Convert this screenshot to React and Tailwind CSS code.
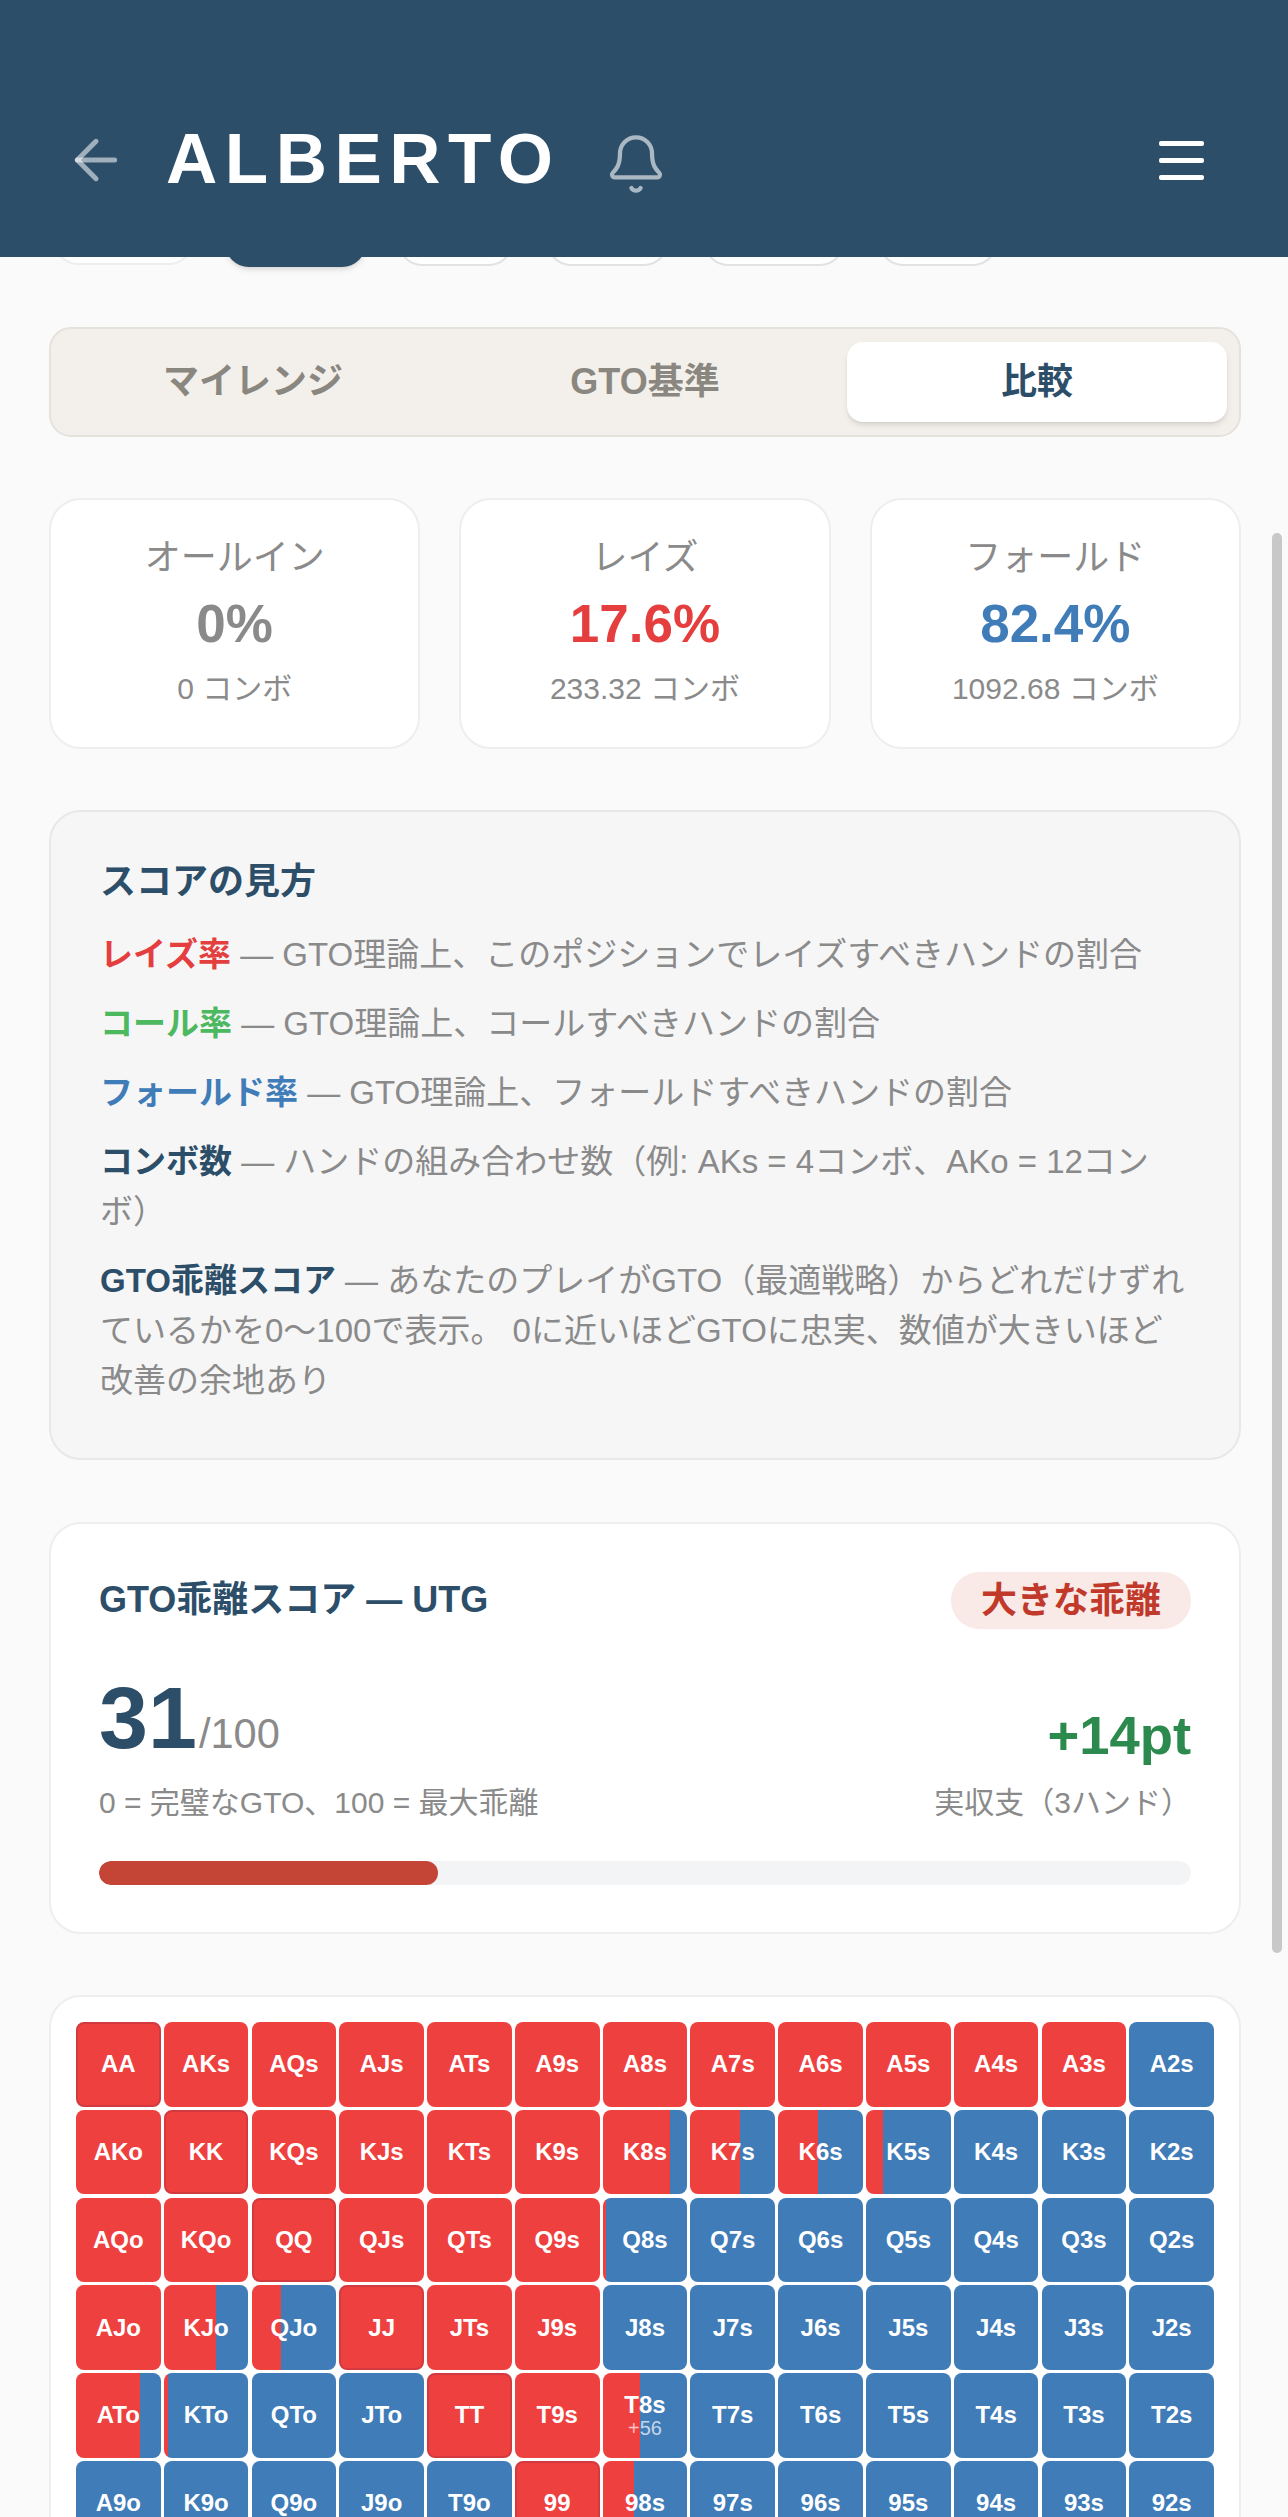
import { ArrowLeft, Bell } from 'lucide-react';

const ranks = ['A', 'K', 'Q', 'J', 'T', '9', '8', '7', '6', '5', '4', '3', '2'];

// share of the cell that is raise, everything not listed is fold
const raise = {
  KJo: 62, QJo: 35, ATo: 75, KTo: 5, T8s: 44, '98s': 37, K8s: 80, K7s: 59, K6s: 47, K5s: 20, Q8s: 4,
  AKs: 100, AQs: 100, AJs: 100, ATs: 100, A9s: 100, A8s: 100, A7s: 100, A6s: 100, A5s: 100, A4s: 100, A3s: 100,
  AKo: 100, KQs: 100, KJs: 100, KTs: 100, K9s: 100, AQo: 100, KQo: 100, QJs: 100, QTs: 100, Q9s: 100,
  AJo: 100, JTs: 100, J9s: 100, T9s: 100,
};

const handName = (row, col) => {
  if (row === col) return ranks[row] + ranks[col];
  return row < col ? ranks[row] + ranks[col] + 's' : ranks[col] + ranks[row] + 'o';
};

const HandCell = ({ row, col }) => {
  const name = handName(row, col);
  const isPair = row === col;
  const pct = isPair ? (row < 7 ? 100 : 0) : raise[name] || 0;
  return (
    <div
      className={`aspect-square rounded-[8px] flex flex-col items-center justify-center text-white font-bold text-[24px] leading-[26px] ${isPair ? 'border-2 border-[#d23a40]' : ''}`}
      style={{ background: `linear-gradient(to right, #ef4040 ${pct}%, #3f7cb8 ${pct}%)` }}
    >
      <span>{name}</span>
      {name === 'T8s' && <span className="font-normal text-[20px] leading-[20px] text-white/70">+56</span>}
    </div>
  );
};

const StatCard = ({ label, value, sub, color }) => (
  <div className="flex-1 h-[251px] bg-white border-2 border-[#eeeeee] rounded-[32px] flex flex-col items-center pt-[35px]">
    <div className="text-[36px] leading-[46px] text-[#8a8a8a]">{label}</div>
    <div className={`text-[53px] leading-[62px] font-bold mt-[12px] ${color}`}>{value}</div>
    <div className="text-[30px] leading-[40px] text-[#8a8a8a] mt-[14px]">{sub}</div>
  </div>
);

const Legend = ({ term, color, children, className }) => (
  <p className={`text-[33px] leading-[50px] text-[#8a8a8a] ${className}`}>
    <b className={`font-bold ${color}`}>{term}</b> — {children}
  </p>
);

export default function App() {
  return (
    <div className="relative w-[1288px] h-[2517px] overflow-hidden bg-[#fafafa] font-['Liberation_Sans','Noto_Sans_CJK_JP',sans-serif]">
      <header className="relative z-10 h-[257px] bg-[#2c4e69] flex items-start pt-[133px] pl-[70px] pr-[84px]">
        <ArrowLeft size={64} stroke="rgba(255,255,255,0.55)" strokeWidth={1.9} className="-mt-[5px] -ml-[6px]" />
        <div className="ml-[38px] text-[71px] leading-[50px] font-bold text-white tracking-[7.5px] h-[50px] mt-[1px]">ALBERTO</div>
        <Bell size={64} stroke="rgba(255,255,255,0.6)" strokeWidth={1.6} className="ml-[44px] -mt-[1px]" />
        <div className="ml-auto flex flex-col gap-[12px] w-[45px] mt-[8px]">
          <div className="h-[5px] rounded-[2px] bg-white" />
          <div className="h-[5px] rounded-[2px] bg-white" />
          <div className="h-[5px] rounded-[2px] bg-white" />
        </div>
      </header>

      {/* filter pills, mostly hidden under the header */}
      <div className="flex items-start h-[70px] -mt-[60px] pl-[54px]">
        <div className="w-[139px] h-[68px] rounded-[24px] bg-white border-2 border-[#eeeeee]" />
        <div className="w-[141px] h-[70px] ml-[32px] rounded-[24px] bg-[#2c4e69] shadow-md" />
        <div className="w-[115px] h-[69px] ml-[32px] rounded-[24px] bg-white border-2 border-[#e2e2e4]" />
        <div className="w-[121px] h-[69px] ml-[34px] rounded-[24px] bg-white border-2 border-[#e2e2e4]" />
        <div className="w-[140px] h-[69px] ml-[36px] rounded-[24px] bg-white border-2 border-[#e2e2e4]" />
        <div className="w-[118px] h-[69px] ml-[35px] rounded-[24px] bg-white border-2 border-[#e2e2e4]" />
      </div>

      <main className="pl-[49px] pr-[47px] pt-[60px]">
        <div className="h-[110px] bg-[#f3f0eb] border-2 border-[#e5e2dc] rounded-[22px] grid grid-cols-3 gap-[12px] px-[12px] py-[13px] text-[36px] font-bold text-[#8a8680]">
          <div className="flex items-center justify-center">マイレンジ</div>
          <div className="flex items-center justify-center">GTO基準</div>
          <div className="bg-white rounded-[16px] shadow-md flex items-center justify-center text-[#2c4e69]">比較</div>
        </div>

        <div className="flex gap-[39px] mt-[61px]">
          <StatCard label="オールイン" value="0%" sub="0 コンボ" color="text-[#8a8a8a]" />
          <StatCard label="レイズ" value="17.6%" sub="233.32 コンボ" color="text-[#e53e3e]" />
          <StatCard label="フォールド" value="82.4%" sub="1092.68 コンボ" color="text-[#3f7cb8]" />
        </div>

        <section className="h-[650px] mt-[61px] bg-[#f6f6f7] border-2 border-[#e8e8e8] rounded-[32px] pt-[47px] pl-[49px] pr-[48px]">
          <h3 className="text-[36px] leading-[46px] font-bold text-[#2c4e69]">スコアの見方</h3>
          <Legend term="レイズ率" color="text-[#e53e3e]" className="mt-[25px]">GTO理論上、このポジションでレイズすべきハンドの割合</Legend>
          <Legend term="コール率" color="text-[#4cb860]" className="mt-[19px]">GTO理論上、コールすべきハンドの割合</Legend>
          <Legend term="フォールド率" color="text-[#3f7cb8]" className="mt-[19px]">GTO理論上、フォールドすべきハンドの割合</Legend>
          <Legend term="コンボ数" color="text-[#2c4e69]" className="mt-[19px]">ハンドの組み合わせ数（例: AKs = 4コンボ、AKo = 12コン<br />ボ）</Legend>
          <Legend term="GTO乖離スコア" color="text-[#2c4e69]" className="mt-[19px]">あなたのプレイがGTO（最適戦略）からどれだけずれ<br />ているかを0〜100で表示。 0に近いほどGTOに忠実、数値が大きいほど<br />改善の余地あり</Legend>
        </section>

        <section className="h-[412px] mt-[62px] bg-white border-2 border-[#eeeeee] rounded-[32px] pt-[48px] px-[48px]">
          <div className="flex justify-between h-[57px]">
            <h3 className="text-[36px] leading-[55px] font-bold text-[#2c4e69]">GTO乖離スコア — UTG</h3>
            <span className="h-[57px] px-[30px] rounded-full bg-[#f9e9e7] text-[#c0392b] text-[36px] font-bold flex items-center">大きな乖離</span>
          </div>
          <div className="flex justify-between items-end mt-[39px]">
            <div className="flex items-baseline">
              <span className="text-[88px] leading-[100px] font-bold text-[#2c4e69]">31</span>
              <span className="text-[41.6px] ml-[2px] text-[#8a8a8a]">/100</span>
            </div>
            <span className="text-[54.4px] leading-[70px] font-bold text-[#2d8a4e] -mb-[3px]">+14pt</span>
          </div>
          <div className="flex justify-between mt-[15px] text-[30px] leading-[40px] text-[#8a8a8a]">
            <span>0 = 完璧なGTO、100 = 最大乖離</span>
            <span>実収支（3ハンド）</span>
          </div>
          <div className="h-[24px] mt-[38px] rounded-full bg-[#f3f4f5] overflow-hidden">
            <div className="h-full w-[31%] rounded-full bg-[#c44536]" />
          </div>
        </section>

        <section className="mt-[61px] bg-white border-2 border-[#eeeeee] rounded-[32px] p-[25px]">
          <div className="grid grid-cols-[repeat(13,minmax(0,1fr))] gap-[3.2px]">
            {ranks.map((_, row) => ranks.map((_, col) => <HandCell key={`${row}-${col}`} row={row} col={col} />))}
          </div>
        </section>
      </main>

      {/* overlay scrollbar */}
      <div className="absolute right-[6px] top-[533px] w-[10px] h-[1420px] rounded-full bg-[#c8c8c8]" />
    </div>
  );
}
